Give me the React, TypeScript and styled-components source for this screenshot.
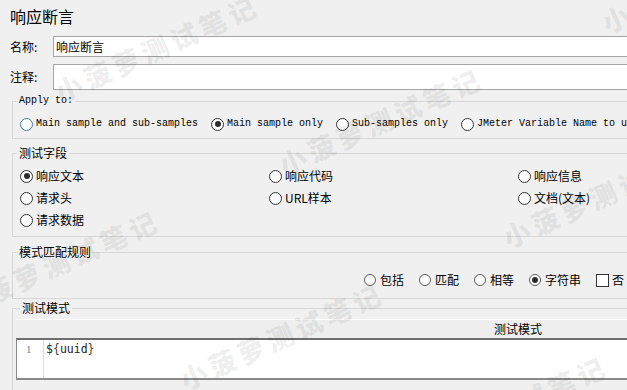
import React from "react";
import styled, { createGlobalStyle } from "styled-components";

const GlobalStyle = createGlobalStyle`
  html, body {
    margin: 0;
    padding: 0;
    background: #f0f0f0;
    overflow: hidden;
  }
  body {
    font-family: "Noto Sans CJK SC", "Liberation Sans", sans-serif;
    font-size: 12px;
    color: #000;
  }
`;

const Page = styled.div`
  position: relative;
  box-sizing: border-box;
  width: 640px;
  height: 390px;
  padding: 6px 0 0 10px;
  overflow: hidden;
`;

const Title = styled.div`
  font-size: 16px;
  line-height: 20px;
  height: 20px;
`;

const FieldRow = styled.div<{ $top: number }>`
  display: flex;
  align-items: center;
  margin-top: ${(p) => p.$top}px;
`;

const FieldLabel = styled.span`
  width: 43px;
  flex-shrink: 0;
  line-height: 14px;
`;

const TextBox = styled.div<{ $height: number }>`
  flex: 1;
  box-sizing: border-box;
  height: ${(p) => p.$height}px;
  background: #fff;
  border: 1px solid #a6a6a6;
  padding: 0 2px;
  line-height: ${(p) => p.$height - 2}px;
  white-space: nowrap;
`;

const Group = styled.fieldset<{ $top: number }>`
  margin: ${(p) => p.$top}px 0 0 2px;
  padding: 0;
  border: 1px solid #d7d7d7;
  min-width: 0;
`;

const Legend = styled.legend<{ $mono?: boolean }>`
  margin-left: 4px;
  padding: 0 2px;
  font-family: ${(p) =>
    p.$mono ? '"Liberation Mono", monospace' : '"Noto Sans CJK SC", sans-serif'};
  font-size: ${(p) => (p.$mono ? 10 : 12)}px;
  line-height: ${(p) => (p.$mono ? 12 : 14)}px;
`;

const ApplyRow = styled.div`
  display: flex;
  align-items: center;
  gap: 13px;
  height: 16px;
  padding: 9px 0 6px 7px;
  white-space: nowrap;
`;

const FieldGrid = styled.div`
  display: grid;
  grid-template-columns: repeat(3, 249px);
  grid-auto-rows: 22px;
  padding: 5px 0 5px 7px;
`;

const PatternRow = styled.div`
  display: flex;
  justify-content: flex-end;
  align-items: center;
  gap: 15px;
  height: 16px;
  padding: 13px 15px 10px 0;
`;

const Choice = styled.label<{ $mono?: boolean; $gap?: number }>`
  display: flex;
  align-items: center;
  gap: ${(p) => p.$gap ?? 3}px;
  flex-shrink: 0;
  white-space: nowrap;
  font-family: ${(p) =>
    p.$mono ? '"Liberation Mono", monospace' : '"Noto Sans CJK SC", sans-serif'};
  font-size: ${(p) => (p.$mono ? 10 : 12)}px;
  line-height: 14px;
`;

const Radio = styled.span<{ $on?: boolean; $hover?: boolean; $small?: boolean }>`
  position: relative;
  box-sizing: border-box;
  width: ${(p) => (p.$small ? 12 : 13)}px;
  height: ${(p) => (p.$small ? 12 : 13)}px;
  border-radius: 50%;
  background: #fff;
  border: 1px solid ${(p) => (p.$hover ? "#3d7ab8" : p.$small ? "#5a5a5a" : "#333")};
  flex-shrink: 0;

  &::after {
    content: "";
    display: ${(p) => (p.$on ? "block" : "none")};
    position: absolute;
    left: 50%;
    top: 50%;
    width: 6px;
    height: 6px;
    margin: -3px 0 0 -3px;
    border-radius: 50%;
    background: #2b2b2b;
  }
`;

const Check = styled.span`
  box-sizing: border-box;
  width: 13px;
  height: 13px;
  background: #fff;
  border: 1px solid #333;
  flex-shrink: 0;
`;

const PatternGroup = styled(Group)`
  padding: 0 0 30px 3px;
`;

const Table = styled.div`
  width: 1004px;
  margin-top: 4px;
`;

const TableHead = styled.div`
  box-sizing: border-box;
  height: 19px;
  border-top: 1px solid #fff;
  background: #eeeeee;
  text-align: center;
  line-height: 17px;
`;

const Editor = styled.div`
  display: flex;
  height: 38px;
  background: #fff;
  border-top: 2px solid #6e6e6e;
  border-bottom: 2px solid #8a8a8a;
  border-left: 1px solid #8a8a8a;
`;

const Gutter = styled.div`
  width: 27px;
  border-right: 1px solid #dcdcdc;
  color: #7a7a9a;
  font-family: "Liberation Serif", serif;
  font-size: 11px;
  line-height: 16px;
  padding: 1px 0 0 9px;
  box-sizing: border-box;
`;

const Code = styled.div`
  padding: 1px 0 0 2px;
  font-family: "DejaVu Sans Mono", monospace;
  font-size: 11.5px;
  line-height: 16px;
  color: #1c1c2e;
`;

const Brace = styled.span`
  color: #5a3a1a;
`;

const Marks = styled.div`
  position: absolute;
  inset: 0;
  pointer-events: none;
  z-index: 5;
`;

const Mark = styled.span`
  position: absolute;
  transform-origin: 0 50%;
  transform: rotate(-24deg);
  font-family: "Noto Sans CJK SC", sans-serif;
  font-weight: 900;
  font-size: 27px;
  line-height: 27px;
  letter-spacing: 4.5px;
  color: rgba(0, 0, 0, 0.075);
  white-space: nowrap;
`;

const fieldChoices = [
  { text: "响应文本", on: true },
  { text: "响应代码" },
  { text: "响应信息" },
  { text: "请求头" },
  { text: "URL样本" },
  { text: "文档(文本)" },
  { text: "请求数据" },
];

const patternChoices = [
  { text: "包括" },
  { text: "匹配" },
  { text: "相等" },
  { text: "字符串", on: true },
];

const markCells = [
  [0, 0],
  [1, 0],
  [2, 0],
  [0, 1],
  [1, 1],
  [2, 1],
  [2, -1],
];

export default function App() {
  return (
    <Page>
      <GlobalStyle />
      <Title>响应断言</Title>
      <FieldRow $top={10}>
        <FieldLabel>名称:</FieldLabel>
        <TextBox $height={21}>响应断言</TextBox>
      </FieldRow>
      <FieldRow $top={7}>
        <FieldLabel>注释:</FieldLabel>
        <TextBox $height={26} />
      </FieldRow>

      <Group $top={5}>
        <Legend $mono>Apply to:</Legend>
        <ApplyRow>
          <Choice $mono>
            <Radio $hover />
            Main sample and sub-samples
          </Choice>
          <Choice $mono>
            <Radio $on />
            Main sample only
          </Choice>
          <Choice $mono>
            <Radio />
            Sub-samples only
          </Choice>
          <Choice $mono>
            <Radio />
            JMeter Variable Name to use
          </Choice>
        </ApplyRow>
      </Group>

      <Group $top={7}>
        <Legend>测试字段</Legend>
        <FieldGrid>
          {fieldChoices.map((c) => (
            <Choice key={c.text}>
              <Radio $on={c.on} />
              {c.text}
            </Choice>
          ))}
        </FieldGrid>
      </Group>

      <Group $top={8}>
        <Legend>模式匹配规则</Legend>
        <PatternRow>
          {patternChoices.map((c) => (
            <Choice key={c.text} $gap={4}>
              <Radio $small $on={c.on} />
              {c.text}
            </Choice>
          ))}
          <Choice>
            <Check />
            否
          </Choice>
        </PatternRow>
      </Group>

      <PatternGroup $top={2}>
        <Legend>测试模式</Legend>
        <Table>
          <TableHead>测试模式</TableHead>
          <Editor>
            <Gutter>1</Gutter>
            <Code>
              $<Brace>{"{"}</Brace>uuid<Brace>{"}"}</Brace>
            </Code>
          </Editor>
        </Table>
      </PatternGroup>

      <Marks>
        {markCells.map(([i, j]) => {
          const cx = 68 + i * 224 - j * 99;
          const cy = 87 + i * 73 + j * 215;
          return (
            <Mark key={`${i}-${j}`} style={{ left: cx - 12, top: cy - 8 }}>
              小菠萝测试笔记
            </Mark>
          );
        })}
      </Marks>
    </Page>
  );
}
